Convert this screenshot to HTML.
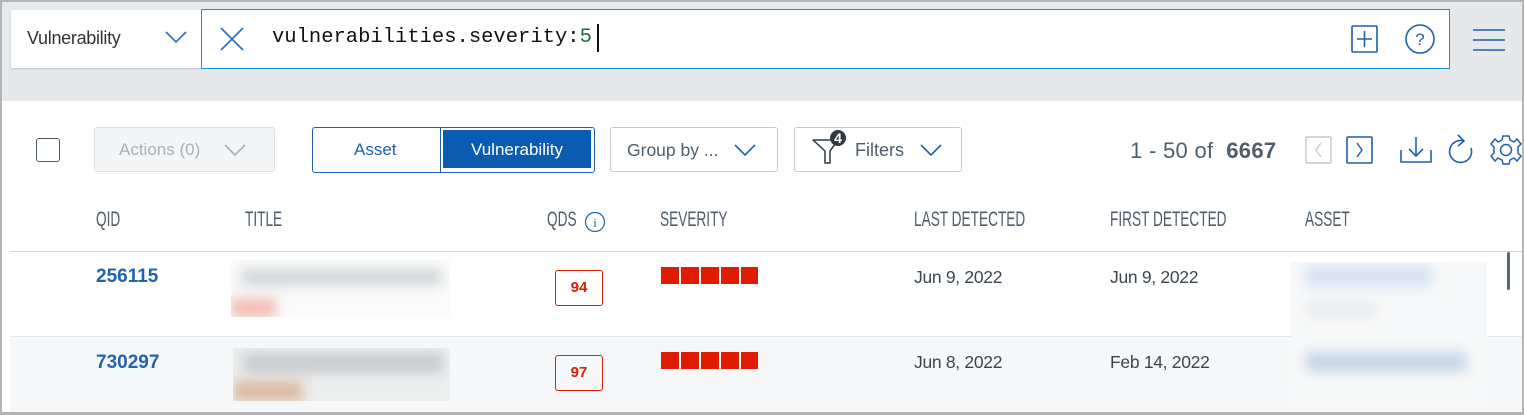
<!DOCTYPE html>
<html><head><style>
*{box-sizing:border-box;margin:0;padding:0}
body{width:1524px;height:415px;overflow:hidden;background:#fff;font-family:"Liberation Sans",sans-serif;position:relative}
.a{position:absolute}
.frame{left:0;top:0;width:1524px;height:415px;border:2px solid #b4b4b4;border-bottom-width:3px}
.top{left:2px;top:2px;width:1520px;height:99px;background:#e6e9ec}
.hd{font-family:"Liberation Sans",sans-serif;font-size:21px;color:#4d5c6b;transform:scaleX(.65);transform-origin:left center;top:208px}
.date{font-size:17.5px;color:#3c4650;letter-spacing:-.3px}
.qid{font-size:19px;font-weight:bold;color:#1f64b0}
.qds{width:48px;height:36px;border:1px solid #d81e05;border-radius:3px;color:#d81e05;font-weight:bold;font-size:15px;text-align:center;line-height:34px}
.sev{width:97px;height:17px;background:repeating-linear-gradient(90deg,#e01b00 0 18px,#fff 18px 20px)}
.blur{filter:blur(6px)}
</style></head><body>
<div class="a top"></div>
<div class="a" style="left:11px;top:10px;width:190px;height:58px;background:#fff;box-shadow:0 1px 2px rgba(0,0,0,.15)"></div>
<div class="a" style="left:27px;top:28px;font-size:18px;color:#333;letter-spacing:-.3px">Vulnerability</div>
<svg class="a" style="left:165px;top:30px" width="22" height="14"><path d="M1 2 L11 12 L21 2" fill="none" stroke="#2a6eb8" stroke-width="1.6"/></svg>
<div class="a" style="left:201px;top:9px;width:1249px;height:60px;background:#fff;border:1px solid #1e90d6"></div>
<svg class="a" style="left:219px;top:26px" width="26" height="26"><path d="M2 2 L24 24 M24 2 L2 24" stroke="#2a6eb8" stroke-width="1.6"/></svg>
<div class="a" style="left:272px;top:26px;font-family:'Liberation Mono',monospace;font-size:20.5px;color:#111">vulnerabilities.severity:<span style="color:#1e6b3a">5</span></div>
<div class="a" style="left:597px;top:24px;width:1.5px;height:28px;background:#111"></div>
<svg class="a" style="left:1350px;top:24px" width="30" height="30"><rect x="2" y="2" width="25" height="26" fill="none" stroke="#1f5fae" stroke-width="1.6" rx="1"/><path d="M14.5 7 V23 M7 15 H22" stroke="#1f5fae" stroke-width="1.6"/></svg>
<svg class="a" style="left:1404px;top:23px" width="32" height="32"><circle cx="16" cy="16" r="14" fill="none" stroke="#1f5fae" stroke-width="1.6"/><text x="16" y="22" text-anchor="middle" font-family="Liberation Sans" font-size="17" fill="#1f5fae">?</text></svg>
<svg class="a" style="left:1472px;top:28px" width="34" height="24"><path d="M1 2 H33 M1 12 H33 M1 22 H33" stroke="#1f5fae" stroke-width="1.6"/></svg>
<div class="a" style="left:36px;top:138px;width:24px;height:24px;border:1.5px solid #4e5d6c;border-radius:3px"></div>
<div class="a" style="left:94px;top:127px;width:181px;height:45px;background:#f4f5f6;border:1px solid #dde0e3;border-radius:3px"></div>
<div class="a" style="left:119px;top:140px;font-size:17px;color:#a7b0b9">Actions (0)</div>
<svg class="a" style="left:224px;top:144px" width="22" height="13"><path d="M1 1 L11 11 L21 1" fill="none" stroke="#a7b0b9" stroke-width="1.6"/></svg>
<div class="a" style="left:312px;top:127px;width:283px;height:46px;border:1.5px solid #1f5fae;border-radius:3px"></div>
<div class="a" style="left:440px;top:127px;width:1px;height:46px;background:#1f5fae"></div>
<div class="a" style="left:354px;top:140px;font-size:17px;color:#1f5fae">Asset</div>
<div class="a" style="left:443px;top:130px;width:148px;height:38px;background:#0b5cb0"></div>
<div class="a" style="left:443px;top:140px;width:148px;text-align:center;font-size:17px;color:#fff">Vulnerability</div>
<div class="a" style="left:610px;top:127px;width:168px;height:45px;border:1px solid #c3c9cf;border-radius:3px"></div>
<div class="a" style="left:627px;top:140px;font-size:17.5px;color:#4e5d6c">Group by ...</div>
<svg class="a" style="left:734px;top:144px" width="22" height="13"><path d="M1 1 L11 11 L21 1" fill="none" stroke="#1f5fae" stroke-width="1.6"/></svg>
<div class="a" style="left:794px;top:127px;width:168px;height:45px;border:1px solid #c3c9cf;border-radius:3px"></div>
<svg class="a" style="left:810px;top:128px" width="40" height="38"><path d="M3 12 H28 L20 23 V35 H15 V23 Z" fill="none" stroke="#2d3a45" stroke-width="1.5" stroke-linejoin="round"/><circle cx="28" cy="10" r="8" fill="#2d3a45"/><text x="28" y="15" text-anchor="middle" font-size="14" font-weight="bold" fill="#fff" font-family="Liberation Sans">4</text></svg>
<div class="a" style="left:855px;top:140px;font-size:18px;color:#4e5d6c">Filters</div>
<svg class="a" style="left:920px;top:144px" width="22" height="13"><path d="M1 1 L11 11 L21 1" fill="none" stroke="#1f5fae" stroke-width="1.6"/></svg>
<div class="a" style="left:1130px;top:138px;font-size:22px;color:#4e5d6c;letter-spacing:.3px">1 - 50 of &nbsp;<b>6667</b></div>
<svg class="a" style="left:1305px;top:136px" width="30" height="28"><rect x="1" y="1" width="25" height="26" fill="none" stroke="#c3c9cf" stroke-width="1.4" rx="1"/><path d="M16 7 L11 14 L16 21" fill="none" stroke="#c3c9cf" stroke-width="1.3"/></svg>
<svg class="a" style="left:1346px;top:136px" width="30" height="28"><rect x="1" y="1" width="25" height="26" fill="none" stroke="#1f5fae" stroke-width="1.6" rx="1"/><path d="M11 7 L16 14 L11 21" fill="none" stroke="#1f5fae" stroke-width="1.5"/></svg>
<svg class="a" style="left:1399px;top:134px" width="34" height="30"><path d="M2 16 V28 H32 V16 M17 3 V22 M10 15 L17 22 L24 15" fill="none" stroke="#1f5fae" stroke-width="1.6"/></svg>
<svg class="a" style="left:1446px;top:133px" width="30" height="34"><path d="M18 8 A11 11 0 1 0 25 15" fill="none" stroke="#1f5fae" stroke-width="1.6"/><path d="M12 2 L18 8 L12 13" fill="none" stroke="#1f5fae" stroke-width="1.6"/></svg>
<svg class="a" style="left:1490px;top:134px" width="34" height="32"><g transform="translate(16,16)" fill="none" stroke="#1f5fae" stroke-width="1.5"><path d="M-3 -14 H3 L4 -10 L8 -8 L11 -11 L15 -6 L12 -3 L12 3 L15 6 L11 11 L8 8 L4 10 L3 14 H-3 L-4 10 L-8 8 L-11 11 L-15 6 L-12 3 L-12 -3 L-15 -6 L-11 -11 L-8 -8 L-4 -10 Z"/><circle r="5.5"/></g></svg>
<div class="a hd" style="left:96px">QID</div>
<div class="a hd" style="left:245px">TITLE</div>
<div class="a hd" style="left:547px">QDS</div>
<svg class="a" style="left:584px;top:211px" width="22" height="22"><circle cx="11" cy="11" r="9.5" fill="none" stroke="#1f64b0" stroke-width="1.2"/><text x="11" y="16" text-anchor="middle" font-size="13" fill="#1f64b0" font-family="Liberation Serif">i</text></svg>
<div class="a hd" style="left:660px">SEVERITY</div>
<div class="a hd" style="left:914px">LAST DETECTED</div>
<div class="a hd" style="left:1110px">FIRST DETECTED</div>
<div class="a hd" style="left:1305px">ASSET</div>
<div class="a" style="left:10px;top:251px;width:1512px;height:1px;background:#d2d5d8"></div>
<div class="a" style="left:10px;top:336px;width:1512px;height:76px;background:#f5f7f9;border-top:1px solid #e3e7eb"></div>
<div class="a" style="left:1507px;top:252px;width:3px;height:38px;background:#5a6874;border-radius:2px"></div>
<div class="a qid" style="left:96px;top:266px">256115</div>
<div class="a" style="left:231px;top:260px;width:219px;height:57px;background:#fafbfb;overflow:hidden"><div class="a blur" style="left:10px;top:8px;width:200px;height:18px;background:#d3d7da"></div><div class="a blur" style="left:0px;top:38px;width:45px;height:20px;background:#f4bcb5"></div></div>
<div class="a qds" style="left:555px;top:270px">94</div>
<div class="a sev" style="left:661px;top:267px"></div>
<div class="a date" style="left:914px;top:267px">Jun 9, 2022</div>
<div class="a date" style="left:1110px;top:267px">Jun 9, 2022</div>
<div class="a" style="left:1291px;top:262px;width:196px;height:140px;background:#f7f8f9;overflow:hidden"><div class="a blur" style="left:15px;top:4px;width:125px;height:20px;background:#d3e1ef"></div><div class="a blur" style="left:15px;top:40px;width:70px;height:14px;background:#e8eaec"></div><div class="a blur" style="left:15px;top:90px;width:160px;height:20px;background:#c6d6e6"></div></div>
<div class="a qid" style="left:96px;top:352px">730297</div>
<div class="a" style="left:233px;top:348px;width:217px;height:53px;background:#eceeef;overflow:hidden"><div class="a blur" style="left:10px;top:5px;width:200px;height:20px;background:#c7cbce"></div><div class="a blur" style="left:0px;top:33px;width:70px;height:20px;background:#dcbaa2"></div></div>
<div class="a qds" style="left:555px;top:355px">97</div>
<div class="a sev" style="left:661px;top:352px"></div>
<div class="a date" style="left:914px;top:352px">Jun 8, 2022</div>
<div class="a date" style="left:1110px;top:352px">Feb 14, 2022</div>
<div class="a frame"></div>
</body></html>
